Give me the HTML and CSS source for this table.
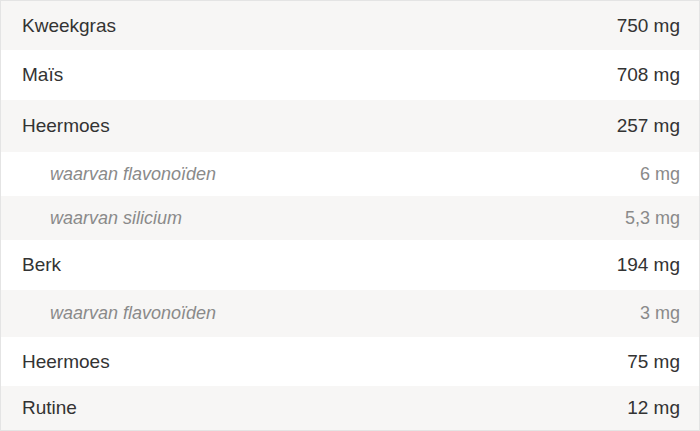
FILE: index.html
```html
<!DOCTYPE html>
<html lang="nl">
<head>
<meta charset="utf-8">
<title>Samenstelling</title>
<link rel="stylesheet" href="styles.css">
</head>
<body>
<div class="table">
  <div class="row striped h49"><span class="name">Kweekgras</span><span class="value">750 mg</span></div>
  <div class="row h50"><span class="name">Maïs</span><span class="value">708 mg</span></div>
  <div class="row striped h52"><span class="name">Heermoes</span><span class="value">257 mg</span></div>
  <div class="row sub h44"><span class="name">waarvan flavonoïden</span><span class="value">6 mg</span></div>
  <div class="row sub striped h44"><span class="name">waarvan silicium</span><span class="value">5,3 mg</span></div>
  <div class="row h50"><span class="name">Berk</span><span class="value">194 mg</span></div>
  <div class="row sub striped h47"><span class="name">waarvan flavonoïden</span><span class="value">3 mg</span></div>
  <div class="row h49"><span class="name">Heermoes</span><span class="value">75 mg</span></div>
  <div class="row striped h44"><span class="name">Rutine</span><span class="value">12 mg</span></div>
</div>
</body>
</html>
```
FILE: styles.css
```css
html, body {
  margin: 0;
  padding: 0;
  background: #ffffff;
}
.table {
  width: 700px;
  height: 431px;
  box-sizing: border-box;
  border: 1px solid #e4e4e4;
  display: flex;
  flex-direction: column;
  font-family: "Liberation Sans", Arial, sans-serif;
  font-size: 19px;
  color: #333333;
}
.row {
  display: flex;
  align-items: center;
  justify-content: space-between;
  padding: 0 19px 0 21px;
  background: #ffffff;
}
.row.striped {
  background: #f7f6f5;
}
.row.sub {
  color: #8a8a8a;
  font-size: 18px;
}
.row.sub .name {
  font-style: italic;
  padding-left: 28px;
}
.h44 { height: 44px; }
.h47 { height: 47px; }
.h49 { height: 49px; }
.h50 { height: 50px; }
.h52 { height: 52px; }
```
